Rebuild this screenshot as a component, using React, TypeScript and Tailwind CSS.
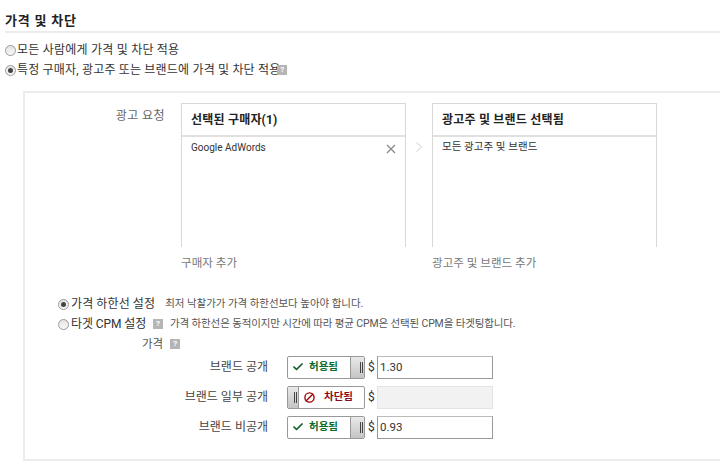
import { Check, Ban } from 'lucide-react';

const font = { fontFamily: '"Roboto", "Noto Sans CJK KR", sans-serif' };

const Help = ({ className = '' }: { className?: string }) => (
  <span className={`inline-flex h-[10px] w-[10px] items-center justify-center bg-[#b5b5b5] text-[8px] leading-none font-bold text-white ${className}`}>?</span>
);

const Radio = ({ checked }: { checked?: boolean }) => (
  <span className="flex h-[11px] w-[11px] shrink-0 items-center justify-center rounded-full border border-[#9a9a9a] bg-gradient-to-b from-[#e4e4e4] to-[#f8f8f8]">
    {checked && <span className="h-[5px] w-[5px] rounded-full bg-[#444]" />}
  </span>
);

const Grip = ({ className = '' }: { className?: string }) => (
  <span className={`flex h-full shrink-0 items-center justify-end gap-[1px] bg-gradient-to-b from-[#e9e9e9] to-[#c4c4c4] pr-[1px] ${className}`}>
    <span className="h-[11px] w-px bg-[#444]" />
    <span className="h-[11px] w-px bg-[#444]" />
  </span>
);

const Toggle = ({ allowed }: { allowed: boolean }) => (
  <div className="flex h-[23px] w-[78px] items-center overflow-hidden rounded-[2px] border border-[#999] bg-white">
    {allowed ? (
      <>
        <div className="flex flex-1 items-center gap-[5px] pl-[4px] text-[10.5px] font-bold text-[#0b6b2b]">
          <Check size={12} strokeWidth={3.5} className="text-[#10602a]" />
          <span>허용됨</span>
        </div>
        <Grip className="w-[14px] border-l border-[#999]" />
      </>
    ) : (
      <>
        <Grip className="w-[11px] border-r border-[#999]" />
        <div className="flex flex-1 items-center gap-[9px] pl-[5px] text-[10.5px] font-bold text-[#8a0a22]">
          <Ban size={11} strokeWidth={3} className="-scale-x-100 text-[#a00000]" />
          <span>차단됨</span>
        </div>
      </>
    )}
  </div>
);

const PriceRow = ({ label, allowed, value }: { label: string; allowed: boolean; value?: string }) => (
  <div className="flex h-[24px] items-center">
    <div className="w-[246px] pr-[1px] text-right text-[12px] tracking-[0px] text-[#444]">{label}</div>
    <div className="ml-[18px]">
      <Toggle allowed={allowed} />
    </div>
    <span className="ml-[3px] w-[9px] text-[12px] text-[#333]">$</span>
    {value ? (
      <div className="flex h-[23px] w-[116px] items-center border border-[#999] border-t-[#bbb] px-[2px] text-[11.5px] text-[#333]">{value}</div>
    ) : (
      <div className="h-[23px] w-[116px] border border-[#e4e4e4] bg-[#f2f2f2]" />
    )}
  </div>
);

const Box = ({ title, children }: { title: string; children: React.ReactNode }) => (
  <div className="flex h-[144px] w-[225px] flex-col border-x border-t border-[#d8d8d8]">
    <div className="flex h-[33px] items-center border-b-2 border-[#e0e0e0] pl-[9px] text-[12px] font-bold tracking-[0.2px] text-[#222]">{title}</div>
    {children}
  </div>
);

export default function App() {
  return (
    <div style={font} className="h-[468px] w-[720px] overflow-hidden bg-white pt-[13px] text-[#333]">
      <div className="ml-[5px] border-b-2 border-[#ececec] pb-[2px] text-[13px] leading-[16px] font-bold tracking-[0.8px] text-[#222]">가격 및 차단</div>

      <div className="mt-[7px] flex h-[20px] items-center gap-px pl-[5px] text-[12px] tracking-[0.22px] text-[#333]">
        <Radio />
        <span>모든 사람에게 가격 및 차단 적용</span>
      </div>
      <div className="flex h-[20px] items-center gap-px pl-[5px] text-[12px] tracking-[0.18px] text-[#333]">
        <Radio checked />
        <span>특정 구매자, 광고주 또는 브랜드에 가격 및 차단 적용</span>
        <Help className="-ml-[4px] w-[8px]" />
      </div>

      <div className="mt-[11px] ml-[23px] h-[370px] border-t-2 border-b-2 border-l-2 border-[#ececec]">
        <div className="mt-[10px] flex">
          <div className="w-[140px] pt-[4px] text-right text-[12px] tracking-[0.4px] text-[#666]">광고 요청</div>
          <div className="ml-[16px] flex">
            <Box title="선택된 구매자(1)">
              <div className="flex items-start justify-between pt-[3px] pr-[9px] pl-[9px] text-[10px] text-[#333]">
                <span>Google AdWords</span>
                <svg width="10" height="10" viewBox="0 0 10 10" className="mt-[4px]" fill="none" stroke="#8a8a8a" strokeWidth="1.3">
                  <path d="M1 1l8 8M9 1l-8 8" />
                </svg>
              </div>
            </Box>
            <div className="flex w-[26px] justify-center pt-[39px]">
              <svg width="6" height="10" viewBox="0 0 6 10" fill="none" stroke="#cfcfcf" strokeWidth="1">
                <path d="M0.5 0.5l5 4.5-5 4.5" />
              </svg>
            </div>
            <Box title="광고주 및 브랜드 선택됨">
              <div className="pt-[2px] pl-[9px] text-[10.5px] tracking-[0.05px] text-[#333]">모든 광고주 및 브랜드</div>
            </Box>
          </div>
        </div>

        <div className="mt-[8px] flex text-[11.5px] tracking-[0.05px] text-[#777]">
          <span className="ml-[156px] w-[251px]">구매자 추가</span>
          <span>광고주 및 브랜드 추가</span>
        </div>

        <div className="mt-[22px] flex h-[20px] items-center pl-[33px]">
          <Radio checked />
          <span className="ml-[2px] text-[12px] tracking-[0.1px] text-[#333]">가격 하한선 설정</span>
          <span className="ml-[10px] text-[10.5px] tracking-[-0.05px] text-[#555]">최저 낙찰가가 가격 하한선보다 높아야 합니다.</span>
        </div>
        <div className="flex h-[20px] items-center pl-[33px]">
          <Radio />
          <span className="ml-[2px] text-[12px] tracking-[-0.1px] text-[#333]">타겟 CPM 설정</span>
          <Help className="ml-[7px]" />
          <span className="ml-[7px] text-[10.5px] tracking-[-0.14px] text-[#555]">가격 하한선은 동적이지만 시간에 따라 평균 CPM은 선택된 CPM을 타겟팅합니다.</span>
        </div>
        <div className="flex h-[20px] items-center pl-[117px] text-[11.5px] tracking-[0px] text-[#555]">
          <span>가격</span>
          <Help className="ml-[7px]" />
        </div>

        <div className="mt-[1px] -ml-[2px] flex flex-col gap-[6px]">
          <PriceRow label="브랜드 공개" allowed value="1.30" />
          <PriceRow label="브랜드 일부 공개" allowed={false} />
          <PriceRow label="브랜드 비공개" allowed value="0.93" />
        </div>
      </div>
    </div>
  );
}
